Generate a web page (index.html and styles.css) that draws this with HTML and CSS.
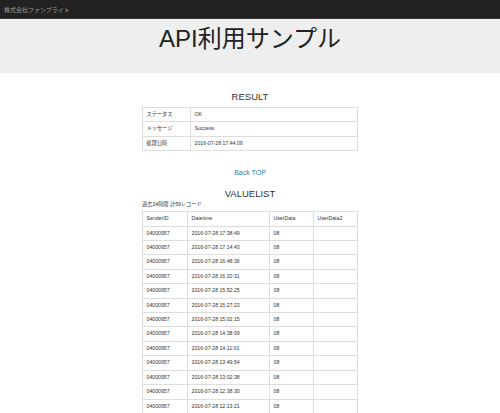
FILE: index.html
```html
<!DOCTYPE html>
<html lang="ja">
<head>
  <meta charset="UTF-8">
  <title>API利用サンプル</title>
  <link rel="stylesheet" href="styles.css">
</head>
<body>
  <div class="navbar">
    <span class="brand">株式会社ファンブライト</span>
  </div>
  <div class="jumbotron">
    <h1>API利用サンプル</h1>
  </div>
  <div class="container">
    <h3>RESULT</h3>
    <table class="tbl result">
      <tr><td class="lbl">ステータス</td><td>OK</td></tr>
      <tr><td class="lbl">メッセージ</td><td>Success</td></tr>
      <tr><td class="lbl">処理日時</td><td>2016-07-28 17:44:09</td></tr>
    </table>
    <a class="back" href="#">Back TOP</a>
    <h3>VALUELIST</h3>
    <div class="count">過去24時間 計59レコード</div>
    <table class="tbl values">
      <tr><td class="c1">SenderID</td><td class="c2">Datetime</td><td class="c3">UserData</td><td>UserData2</td></tr>
      <tr><td>04000957</td><td>2016-07-28 17:38:49</td><td>08</td><td></td></tr>
      <tr><td>04000957</td><td>2016-07-28 17:14:43</td><td>08</td><td></td></tr>
      <tr><td>04000957</td><td>2016-07-28 16:48:36</td><td>08</td><td></td></tr>
      <tr><td>04000957</td><td>2016-07-28 16:20:31</td><td>08</td><td></td></tr>
      <tr><td>04000957</td><td>2016-07-28 15:52:25</td><td>08</td><td></td></tr>
      <tr><td>04000957</td><td>2016-07-28 15:27:23</td><td>08</td><td></td></tr>
      <tr><td>04000957</td><td>2016-07-28 15:02:15</td><td>08</td><td></td></tr>
      <tr><td>04000957</td><td>2016-07-28 14:38:09</td><td>08</td><td></td></tr>
      <tr><td>04000957</td><td>2016-07-28 14:11:01</td><td>08</td><td></td></tr>
      <tr><td>04000957</td><td>2016-07-28 13:49:54</td><td>08</td><td></td></tr>
      <tr><td>04000957</td><td>2016-07-28 13:02:38</td><td>08</td><td></td></tr>
      <tr><td>04000957</td><td>2016-07-28 12:38:30</td><td>08</td><td></td></tr>
      <tr><td>04000957</td><td>2016-07-28 12:13:21</td><td>08</td><td></td></tr>
    </table>
  </div>
</body>
</html>
```

FILE: styles.css
```css
body {
  margin: 0;
  background: #fff;
  color: #333;
  font-family: "Liberation Sans", "Noto Sans CJK JP", sans-serif;
  overflow: hidden;
}
.navbar {
  height: 18px;
  background: #222;
  border-bottom: 1px solid #3a3a3a;
  display: flex;
  align-items: center;
  padding-left: 4px;
}
.brand { color: #9d9d9d; font-size: 6px; }
.jumbotron {
  height: 54px;
  background: #eee;
  text-align: center;
}
.jumbotron h1 {
  margin: 0;
  padding-top: 5px;
  font-size: 24px;
  line-height: 30px;
  font-weight: normal;
  color: #222;
}
.container {
  width: 216px;
  margin: 0 auto;
  display: flex;
  flex-direction: column;
  align-items: center;
}
h3 {
  margin: 18px 0 4px 0;
  font-size: 9.5px;
  line-height: 12px;
  font-weight: normal;
}
.back {
  margin-top: 17px;
  color: #337ab7;
  text-decoration: none;
  font-size: 7px;
  line-height: 10px;
}
.back + h3 { margin-top: 10px; margin-bottom: 1px; }
.count {
  align-self: flex-start;
  font-size: 5.2px;
  line-height: 7px;
  margin-bottom: 3px;
}
.tbl {
  width: 216px;
  border-collapse: collapse;
  font-size: 5.2px;
}
.tbl td {
  border: 1px solid #ddd;
  padding: 0 3.5px;
  line-height: 13.4px;
  white-space: nowrap;
}
.result .lbl { width: 40px; }
.values .c1 { width: 37px; }
.values .c2 { width: 74px; }
.values .c3 { width: 36px; }
```
